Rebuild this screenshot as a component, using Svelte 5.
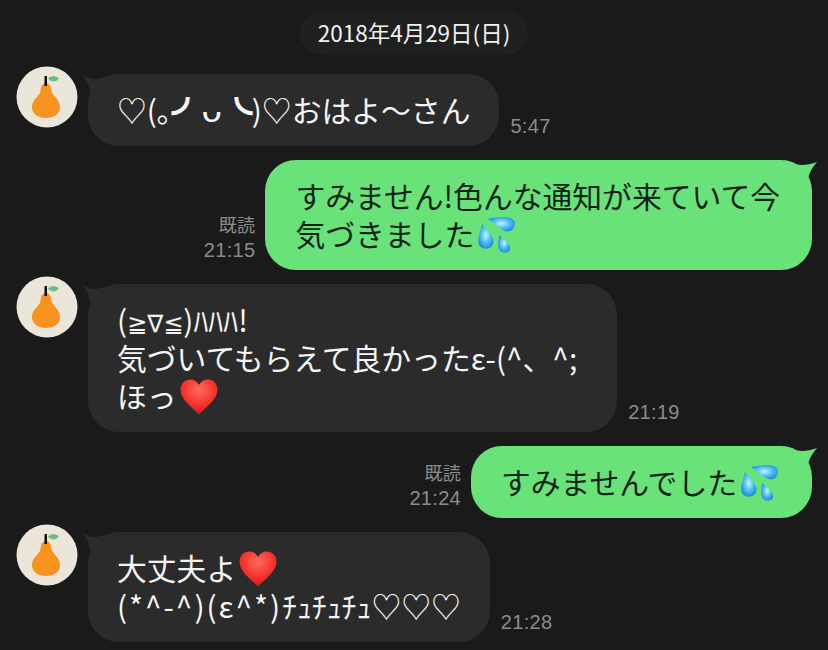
<script>
  // small inline drawings reused across the bubbles
</script>

{#snippet avatar()}
  <svg class="avatar" viewBox="0 0 62 62" aria-hidden="true">
    <circle cx="31" cy="31" r="30.5" fill="#ece6da" />
    <path d="M30 17C26 17 25 21 24.5 25C24 30 16 33 16 41C16 48 22 52 30 52C38 52 44 48 44 41C44 33 36.500 30 35.500 25C35 21 34 17 30 17Z" fill="#f7931e" />
    <rect x="28.500" y="10" width="2.500" height="10" fill="#111" />
    <path d="M32 12.500C35 9 40 9 43 12.500C40 16.500 35 16.500 32 12.500Z" fill="#6dbd7c" />
  </svg>
{/snippet}

{#snippet tailLeft()}
  <svg class="tail left" viewBox="0 0 34 20" aria-hidden="true">
    <path d="M0 0C6 6 13 7 20 5L34 3V20H9C9 13 5 6 0 0Z" />
  </svg>
{/snippet}

{#snippet tailRight()}
  <svg class="tail right" viewBox="0 0 34 30" aria-hidden="true">
    <path d="M0 0C8 5 20 7 33 2C28 8 24 14 24 22L22 30H0Z" />
  </svg>
{/snippet}

{#snippet heart()}
  <svg class="emoji heart" viewBox="0 0 38 36" aria-hidden="true">
    <path d="M19 35.500C13 29 0.500 21 0.500 10.500C0.500 4.500 5 0.500 10.500 0.500C14.500 0.500 17.500 3 19 6C20.500 3 23.500 0.500 27.500 0.500C33 0.500 37.500 4.500 37.500 10.500C37.500 21 25 29 19 35.500Z" fill="url(#heartFill)" />
  </svg>
{/snippet}

{#snippet drops()}
  <svg class="emoji drops" viewBox="0 0 38 36" aria-hidden="true">
    <path d="M10 2C24 -1 36 -1 37 6C37 13 31 16 26 13.500C20 10.500 16 6 10 2Z" fill="url(#dropFill)" />
    <path d="M4 7C11 14 17 21 15 27C13 33 4 33 1 28C-1 22 2 15 4 7Z" fill="url(#dropFill)" />
    <path d="M21 18C26 23 33 27 32 32C31 37 23 37 21 32C19 28 21 24 21 18Z" fill="url(#dropFill)" />
  </svg>
{/snippet}

<svg class="defs" width="0" height="0" aria-hidden="true">
  <defs>
    <radialGradient id="heartFill" cx="0.5" cy="0.3" r="0.75">
      <stop offset="0" stop-color="#ff6a5e" />
      <stop offset="0.6" stop-color="#f5302c" />
      <stop offset="1" stop-color="#d90d18" />
    </radialGradient>
    <radialGradient id="dropFill" cx="0.5" cy="0.45" r="0.6">
      <stop offset="0" stop-color="#c8f0ff" />
      <stop offset="0.5" stop-color="#52c0f5" />
      <stop offset="1" stop-color="#1484dc" />
    </radialGradient>
  </defs>
</svg>

<main class="chat">
  <div class="date">2018年4月29日(日)</div>

  <div class="row in">
    {@render avatar()}
    <div class="bubble dark">
      {@render tailLeft()}
      ♡(｡<span class="face arc">◞</span><span class="face">ᴗ</span><span class="face arc end">◟</span>)♡おはよ～さん
    </div>
    <div class="meta"><span>5:47</span></div>
  </div>

  <div class="row out">
    <div class="meta"><span>既読</span><span>21:15</span></div>
    <div class="bubble green">
      {@render tailRight()}
      すみません!色んな通知が来ていて今<br />気づきました{@render drops()}
    </div>
  </div>

  <div class="row in">
    {@render avatar()}
    <div class="bubble dark roomy">
      {@render tailLeft()}
      (<span class="math">≧∇≦</span>)ﾊﾊﾊ!<br />気づいてもらえて良かったε-(^、^;<br />ほっ{@render heart()}
    </div>
    <div class="meta"><span>21:19</span></div>
  </div>

  <div class="row out">
    <div class="meta"><span>既読</span><span>21:24</span></div>
    <div class="bubble green">
      {@render tailRight()}
      すみませんでした{@render drops()}
    </div>
  </div>

  <div class="row in">
    {@render avatar()}
    <div class="bubble dark">
      {@render tailLeft()}
      大丈夫よ{@render heart()}<br /><span class="spaced">(*^-^)(ε^*)</span>ﾁｭﾁｭﾁｭ♡♡♡
    </div>
    <div class="meta"><span>21:28</span></div>
  </div>
</main>

<style>
  :global(body) {
    background: #1a1a1a;
  }
  .defs {
    position: absolute;
  }
  .chat {
    height: 650px;
    overflow: hidden;
    box-sizing: border-box;
    padding: 11px 16px 0;
    display: flex;
    flex-direction: column;
    gap: 14px;
    background: #1a1a1a;
    font-family: "Noto Sans CJK JP", "Liberation Sans", sans-serif;
  }
  .date {
    align-self: center;
    margin-bottom: 5px;
    padding: 0 18px;
    height: 44px;
    line-height: 42px;
    border-radius: 22px;
    background: #202020;
    color: #f2f2f2;
    font-size: 22.5px;
    white-space: nowrap;
  }
  .row {
    display: flex;
    align-items: flex-end;
    gap: 10px;
  }
  .row.out {
    justify-content: flex-end;
  }
  .row.in .meta {
    margin-left: 1px;
  }
  .avatar {
    width: 62px;
    height: 62px;
    align-self: flex-start;
    margin-top: -8px;
    flex: none;
  }
  .bubble {
    position: relative;
    height: max-content;
    padding: 16px 29px 18px;
    border-radius: 31px;
    font-size: 29.8px;
    line-height: 38px;
    white-space: nowrap;
  }
  .bubble.roomy {
    padding-right: 40px;
  }
  .dark {
    background: #2b2b2b;
    color: #f5f5f5;
  }
  .green {
    padding-left: 30px;
    padding-right: 32px;
    background: #6ae27a;
    color: #10241a;
  }
  .tail {
    position: absolute;
    top: -1px;
    width: 34px;
  }
  .tail.left {
    left: -7px;
    height: 20px;
    fill: #2b2b2b;
  }
  .tail.right {
    right: -6px;
    top: 0;
    height: 30px;
    fill: #6ae27a;
  }
  .face {
    display: inline-block;
    width: 30px;
    text-align: center;
    line-height: 0;
    font-size: 36px;
    vertical-align: 0;
  }
  .face.arc {
    width: 25px;
    text-align: left;
    font-size: 44px;
    font-weight: 700;
    vertical-align: 13px;
  }
  .face.arc.end {
    text-align: right;
  }
  .math {
    font-family: "DejaVu Sans", sans-serif;
    font-size: 24px;
    line-height: 0;
  }
  .spaced {
    letter-spacing: 2px;
  }
  .emoji {
    display: inline-block;
    width: 38px;
    height: 36px;
    margin: -10px 0;
    vertical-align: 3px;
  }
  .emoji.heart {
    margin-left: 3px;
  }
  .emoji.drops {
    margin-left: 4px;
    margin-right: 1px;
  }
  .meta {
    display: flex;
    flex-direction: column;
    align-items: flex-end;
    padding-bottom: 8px;
    color: #8c8c8c;
    font-family: "Liberation Sans", "Noto Sans CJK JP", sans-serif;
    font-size: 20px;
    line-height: 24px;
    letter-spacing: 0.3px;
  }
  .meta span:first-child:not(:last-child) {
    font-size: 18px;
  }
</style>
